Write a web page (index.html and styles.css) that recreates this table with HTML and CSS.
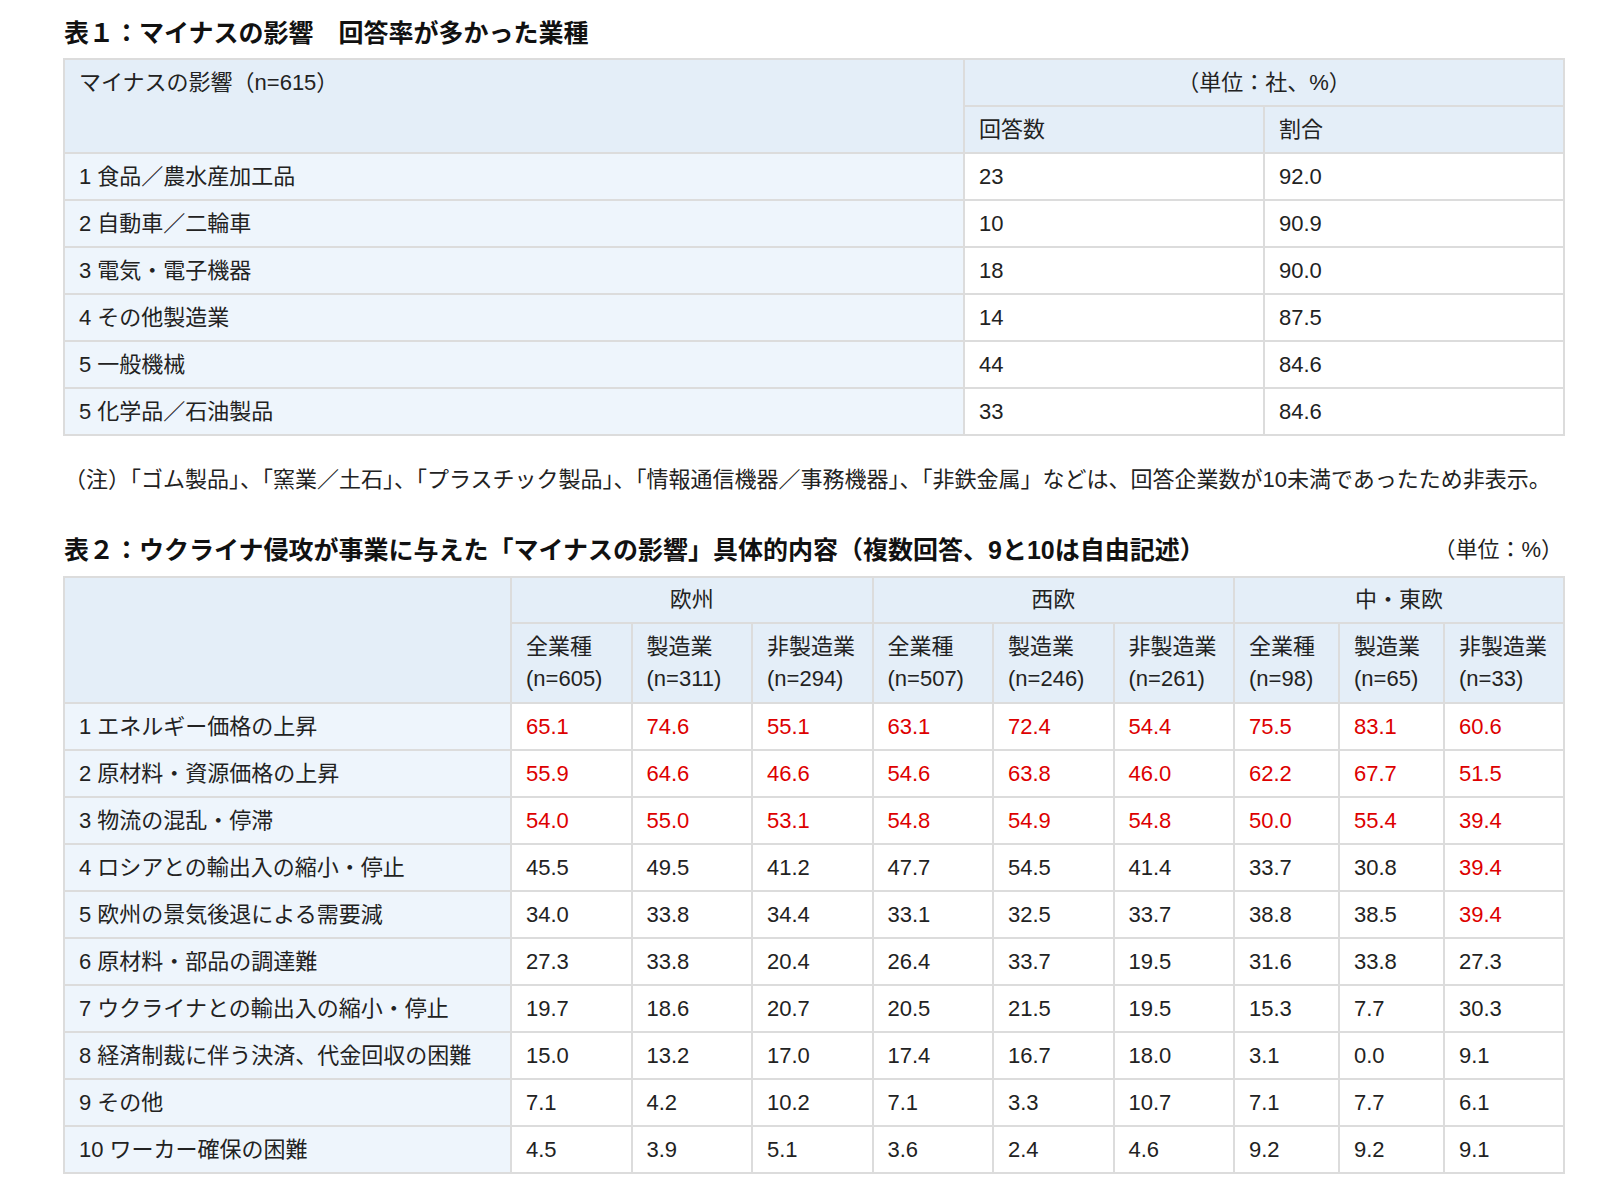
FILE: index.html
```html
<!DOCTYPE html>
<html lang="ja">
<head>
<meta charset="utf-8">
<title>マイナスの影響</title>
<link rel="stylesheet" href="styles.css">
</head>
<body>
<main class="page">
  <h2 class="title">表１：マイナスの影響　回答率が多かった業種</h2>
  <table class="tbl tbl1">
    <colgroup><col class="c1-label"><col class="c1-val"><col class="c1-val"></colgroup>
    <thead>
      <tr>
        <th rowspan="2" class="top-left">マイナスの影響（n=615）</th>
        <th colspan="2" class="center">（単位：社、%）</th>
      </tr>
      <tr><th>回答数</th><th>割合</th></tr>
    </thead>
    <tbody>
      <tr><th>1 食品／農水産加工品</th><td>23</td><td>92.0</td></tr>
      <tr><th>2 自動車／二輪車</th><td>10</td><td>90.9</td></tr>
      <tr><th>3 電気・電子機器</th><td>18</td><td>90.0</td></tr>
      <tr><th>4 その他製造業</th><td>14</td><td>87.5</td></tr>
      <tr><th>5 一般機械</th><td>44</td><td>84.6</td></tr>
      <tr><th>5 化学品／石油製品</th><td>33</td><td>84.6</td></tr>
    </tbody>
  </table>
  <p class="note">（注）「ゴム製品」、「窯業／土石」、「プラスチック製品」、「情報通信機器／事務機器」、「非鉄金属」などは、回答企業数が10未満であったため非表示。</p>

  <div class="title-row">
    <h2 class="title">表２：ウクライナ侵攻が事業に与えた「マイナスの影響」具体的内容（複数回答、9と10は自由記述）</h2>
    <span class="unit">（単位：%）</span>
  </div>
  <table class="tbl tbl2">
    <colgroup>
      <col class="c2-label">
      <col class="c2-a"><col class="c2-a"><col class="c2-a">
      <col class="c2-a"><col class="c2-a"><col class="c2-a">
      <col class="c2-b"><col class="c2-b"><col class="c2-c">
    </colgroup>
    <thead>
      <tr class="h-region">
        <th rowspan="2"></th>
        <th colspan="3" class="center">欧州</th>
        <th colspan="3" class="center">西欧</th>
        <th colspan="3" class="center">中・東欧</th>
      </tr>
      <tr class="h-sub">
        <th>全業種<br>(n=605)</th><th>製造業<br>(n=311)</th><th>非製造業<br>(n=294)</th>
        <th>全業種<br>(n=507)</th><th>製造業<br>(n=246)</th><th>非製造業<br>(n=261)</th>
        <th>全業種<br>(n=98)</th><th>製造業<br>(n=65)</th><th>非製造業<br>(n=33)</th>
      </tr>
    </thead>
    <tbody>
      <tr><th>1 エネルギー価格の上昇</th><td class="r">65.1</td><td class="r">74.6</td><td class="r">55.1</td><td class="r">63.1</td><td class="r">72.4</td><td class="r">54.4</td><td class="r">75.5</td><td class="r">83.1</td><td class="r">60.6</td></tr>
      <tr><th>2 原材料・資源価格の上昇</th><td class="r">55.9</td><td class="r">64.6</td><td class="r">46.6</td><td class="r">54.6</td><td class="r">63.8</td><td class="r">46.0</td><td class="r">62.2</td><td class="r">67.7</td><td class="r">51.5</td></tr>
      <tr><th>3 物流の混乱・停滞</th><td class="r">54.0</td><td class="r">55.0</td><td class="r">53.1</td><td class="r">54.8</td><td class="r">54.9</td><td class="r">54.8</td><td class="r">50.0</td><td class="r">55.4</td><td class="r">39.4</td></tr>
      <tr><th>4 ロシアとの輸出入の縮小・停止</th><td>45.5</td><td>49.5</td><td>41.2</td><td>47.7</td><td>54.5</td><td>41.4</td><td>33.7</td><td>30.8</td><td class="r">39.4</td></tr>
      <tr><th>5 欧州の景気後退による需要減</th><td>34.0</td><td>33.8</td><td>34.4</td><td>33.1</td><td>32.5</td><td>33.7</td><td>38.8</td><td>38.5</td><td class="r">39.4</td></tr>
      <tr><th>6 原材料・部品の調達難</th><td>27.3</td><td>33.8</td><td>20.4</td><td>26.4</td><td>33.7</td><td>19.5</td><td>31.6</td><td>33.8</td><td>27.3</td></tr>
      <tr><th>7 ウクライナとの輸出入の縮小・停止</th><td>19.7</td><td>18.6</td><td>20.7</td><td>20.5</td><td>21.5</td><td>19.5</td><td>15.3</td><td>7.7</td><td>30.3</td></tr>
      <tr><th>8 経済制裁に伴う決済、代金回収の困難</th><td>15.0</td><td>13.2</td><td>17.0</td><td>17.4</td><td>16.7</td><td>18.0</td><td>3.1</td><td>0.0</td><td>9.1</td></tr>
      <tr><th>9 その他</th><td>7.1</td><td>4.2</td><td>10.2</td><td>7.1</td><td>3.3</td><td>10.7</td><td>7.1</td><td>7.7</td><td>6.1</td></tr>
      <tr><th>10 ワーカー確保の困難</th><td>4.5</td><td>3.9</td><td>5.1</td><td>3.6</td><td>2.4</td><td>4.6</td><td>9.2</td><td>9.2</td><td>9.1</td></tr>
    </tbody>
  </table>
</main>
</body>
</html>
```
FILE: styles.css
```css
html, body {
  margin: 0;
  padding: 0;
  background: #ffffff;
}
body {
  font-family: "Liberation Sans", "Noto Sans CJK JP", sans-serif;
  color: #222222;
}
.page {
  padding: 17px 0 0 63px;
  width: 1500px;
}
.title {
  margin: 0;
  font-size: 25px;
  line-height: 32px;
  font-weight: 700;
  color: #111111;
  padding-left: 1px;
}
.tbl {
  border-collapse: collapse;
  table-layout: fixed;
  width: 1500px;
  font-size: 22px;
  line-height: 32px;
  border: 2px solid #dcdcdc;
}
.tbl1 {
  margin-top: 9px;
}
.c1-label { width: 900px; }
.c1-val { width: 300px; }
.tbl th,
.tbl td {
  border: 2px solid #dcdcdc;
  padding: 0 14px;
  text-align: left;
  font-weight: 400;
  vertical-align: middle;
}
.tbl tr {
  height: 47px;
}
.tbl thead th {
  background: #e4eef8;
}
.tbl tbody th {
  background: #eef5fc;
}
.tbl td {
  background: #ffffff;
}
.tbl .center {
  text-align: center;
}
.tbl .top-left {
  vertical-align: top;
  padding-top: 7px;
}
.note {
  margin: 28px 0 0 1px;
  font-size: 22px;
  line-height: 32px;
}
.title-row {
  margin-top: 38px;
  display: flex;
  align-items: center;
  justify-content: space-between;
}
.unit {
  font-size: 22px;
  line-height: 32px;
  padding-right: 0;
}
.tbl2 {
  margin-top: 10px;
}
.c2-label { width: 447px; }
.c2-a { width: 120.5px; }
.c2-b { width: 105px; }
.c2-c { width: 120px; }
.tbl2 .h-region {
  height: 46px;
}
.tbl2 .h-sub {
  height: 80px;
}
.tbl .r {
  color: #dd0000;
}
```
